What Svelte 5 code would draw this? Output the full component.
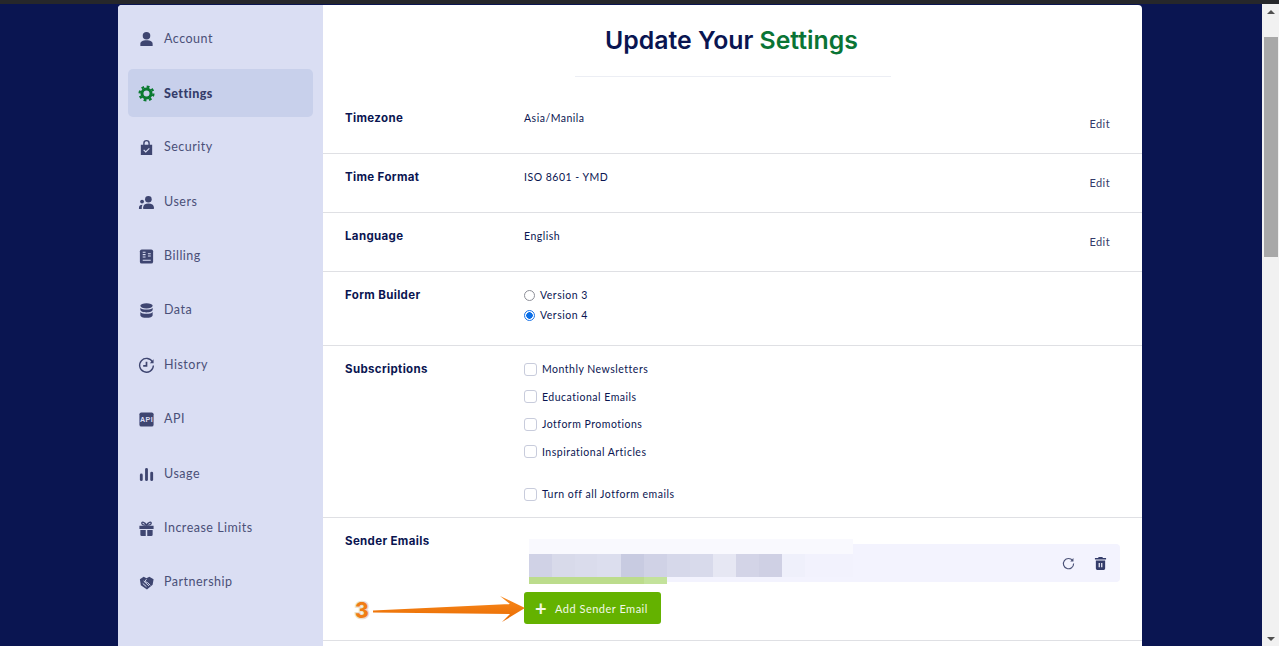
<script>
  const nav = [
    { label: 'Account', icon: 'account' },
    { label: 'Settings', icon: 'settings', active: true },
    { label: 'Security', icon: 'security' },
    { label: 'Users', icon: 'users' },
    { label: 'Billing', icon: 'billing' },
    { label: 'Data', icon: 'data' },
    { label: 'History', icon: 'history' },
    { label: 'API', icon: 'api' },
    { label: 'Usage', icon: 'usage' },
    { label: 'Increase Limits', icon: 'gift' },
    { label: 'Partnership', icon: 'partner' }
  ];

  const simpleRows = [
    { label: 'Timezone', value: 'Asia/Manila' },
    { label: 'Time Format', value: 'ISO 8601 - YMD' },
    { label: 'Language', value: 'English' }
  ];

  const subscriptions = ['Monthly Newsletters', 'Educational Emails', 'Jotform Promotions', 'Inspirational Articles'];

  // pixelated blur that hides the address
  const blurBlocks = [
    ['#d0d2e6', 23], ['#d8daea', 23], ['#dadcec', 22], ['#dcdeee', 24], ['#c8cbe1', 23], ['#d0d2e6', 23],
    ['#d6d8ea', 23], ['#d8daeb', 23], ['#e6e7f3', 23], ['#d3d4e7', 23], ['#cfd0e4', 23], ['#eff0fb', 23], ['#f2f2fd', 48]
  ];
</script>

<div class="page">
  <div class="topbar"></div>
  <div class="viewport">
    <div class="canvas">
      <div class="card">
        <aside class="sidebar">
          {#each nav as item}
            <div class="nav-item" class:active={item.active}>
              <svg class="nav-icon" viewBox="0 0 18 18" fill="#3e4570">
                {#if item.icon === 'account'}
                  <circle cx="9" cy="5" r="4" />
                  <path d="M2.500 16v-2.500C2.500 11 5 9.700 9 9.700s6.500 1.300 6.500 3.800V16z" />
                {:else if item.icon === 'settings'}
                  <circle cx="9" cy="9" r="4.800" fill="none" stroke="#0a7a30" stroke-width="3.200" />
                  <circle cx="9" cy="9" r="7.300" fill="none" stroke="#0a7a30" stroke-width="2.400" stroke-dasharray="3 2.730" />
                {:else if item.icon === 'security'}
                  <path fill-rule="evenodd" d="M5.500 6V4.500a3.500 3.500 0 0 1 7 0V6H15v11H3V6zM7 6h4V4.500a2 2 0 0 0-4 0z" />
                  <path d="M6 11.500l2.200 2.200L12 10" fill="none" stroke="#dadef3" stroke-width="1.200" />
                {:else if item.icon === 'users'}
                  <circle cx="11" cy="5.500" r="3.500" />
                  <path d="M5.500 16v-2c0-2.500 2-4 5.500-4s5.800 1.500 5.800 4v2z" />
                  <circle cx="4.300" cy="8" r="2" />
                  <path d="M1 16v-1.500C1 12.500 2.300 11.300 4.800 11.300c-.5.800-.8 1.700-.8 2.700v2z" />
                {:else if item.icon === 'billing'}
                  <rect x="2" y="1.500" width="14" height="15" rx="2" />
                  <path d="M5 4.500h3M5 7h3M5 9.500h3M10.500 6h3M10.500 8.500h3M5 13h8.500" stroke="#dadef3" stroke-width="1.100" fill="none" />
                {:else if item.icon === 'data'}
                  <ellipse cx="9" cy="4" rx="6.500" ry="2.800" />
                  <path d="M2.500 6v2.200C2.500 9.800 5.400 11 9 11s6.500-1.200 6.500-2.800V6C14.300 7.500 11.800 8 9 8S3.700 7.500 2.500 6z" />
                  <path d="M2.500 10.500v3.500c0 1.600 2.900 2.800 6.500 2.800s6.500-1.200 6.500-2.800v-3.500c-1.200 1.500-3.700 2-6.500 2s-5.300-.5-6.500-2z" />
                {:else if item.icon === 'history'}
                  <path d="M15.500 5.500A7.300 7.300 0 1 0 16.300 9" fill="none" stroke="#3e4570" stroke-width="1.400" />
                  <path d="M16.500 2.500v4h-4z" />
                  <path d="M9 5v4.500H5.500" fill="none" stroke="#3e4570" stroke-width="1.800" />
                {:else if item.icon === 'api'}
                  <rect x="1.500" y="1.500" width="15" height="15" rx="2" />
                  <text x="9" y="12" text-anchor="middle" class="api-text">API</text>
                {:else if item.icon === 'usage'}
                  <rect x="2" y="8" width="3" height="8" rx="1.500" />
                  <rect x="7.500" y="2" width="3" height="14" rx="1.500" />
                  <rect x="13" y="6" width="3" height="10" rx="1.500" />
                {:else if item.icon === 'gift'}
                  <path fill-rule="evenodd" d="M1.500 6h15v3.500h-15zM2.500 10.500h5.700V17H4a1.500 1.500 0 0 1-1.500-1.500zM9.800 10.500h5.700v5a1.500 1.500 0 0 1-1.500 1.500H9.800z" />
                  <path d="M9 5.500C7 2 4 1.500 4 3.500S7 5.500 9 5.500C11 5.500 14 5.500 14 3.500S11 2 9 5.500z" fill="none" stroke="#3e4570" stroke-width="1.400" />
                {:else}
                  <path d="M2 5.500L6 3l3 1.500L12 3l4.500 2.500-1 6L9.500 16.500 3 12z" />
                  <path d="M6 7.500l5.500 5M5 10l4 3.500M9 5.500L7 8l3 1 3 3" fill="none" stroke="#dadef3" stroke-width="1" />
                {/if}
              </svg>
              <span>{item.label}</span>
            </div>
          {/each}
        </aside>

        <main class="main">
          <header class="head">
            <h1>Update Your <em>Settings</em></h1>
            <div class="head-rule"></div>
          </header>

          {#each simpleRows as row}
            <section class="row simple">
              <h2>{row.label}</h2>
              <div class="value">{row.value}</div>
              <button class="edit">Edit</button>
            </section>
          {/each}

          <section class="row builder">
            <h2>Form Builder</h2>
            <div class="options">
              <label class="opt"><span class="radio"></span>Version 3</label>
              <label class="opt"><span class="radio on"></span>Version 4</label>
            </div>
          </section>

          <section class="row subs">
            <h2>Subscriptions</h2>
            <div class="checks">
              {#each subscriptions as s}
                <label class="chk"><span class="box"></span>{s}</label>
              {/each}
              <label class="chk off"><span class="box"></span>Turn off all Jotform emails</label>
            </div>
          </section>

          <section class="row sender">
            <h2>Sender Emails</h2>
            <div class="sender-body">
              <div class="email-panel">
                <div class="blur">
                  <div class="blur-top"></div>
                  <div class="blur-mid">
                    {#each blurBlocks as b}
                      <i style="background:{b[0]};width:{b[1]}px"></i>
                    {/each}
                  </div>
                  <div class="blur-bot"></div>
                </div>
                <svg class="act" viewBox="0 0 14 14" fill="none" stroke="#4b5278" stroke-width="1.200">
                  <path d="M11.500 4A5.500 5.500 0 1 0 12.500 7" />
                  <path d="M12.300 1.200v3.600H8.900z" fill="#4b5278" stroke="none" />
                </svg>
                <svg class="act" viewBox="0 0 14 14" fill="#343c6a">
                  <path d="M5 0h4l.6 1.200H13v1.600H1V1.200h3.400z" />
                  <path fill-rule="evenodd" d="M2 3.800h10v8.700A1.500 1.500 0 0 1 10.500 14h-7A1.500 1.500 0 0 1 2 12.500zM5 6.500v4.500h1.300V6.500zM7.700 6.500v4.500H9V6.500z" />
                </svg>
              </div>
              <button class="add"><span class="plus">+</span>Add Sender Email</button>
              <svg class="callout" width="180" height="44" viewBox="0 0 180 44">
                <defs>
                  <linearGradient id="arrow" x1="0" x2="0" y1="0" y2="1">
                    <stop offset="0" stop-color="#f98a1e" />
                    <stop offset="1" stop-color="#e86a00" />
                  </linearGradient>
                </defs>
                <path d="M21 28.500L158 22 148 14 173 26 150 40 158 32 21 30.500z" fill="url(#arrow)" />
                <text x="3" y="36" class="three">3</text>
              </svg>
            </div>
          </section>
        </main>
      </div>
    </div>
    <div class="scrollbar">
      <div class="arrow-up"></div>
      <div class="thumb"></div>
      <div class="arrow-down"></div>
    </div>
  </div>
</div>

<style>
  :global(body) {
    margin: 0;
    overflow: hidden;
  }

  .page {
    height: 646px;
    display: flex;
    flex-direction: column;
    overflow: hidden;
    font-family: Lato, "Liberation Sans", sans-serif;
    color: #0a1551;
  }

  .topbar {
    height: 4px;
    background: #26272b;
    flex-shrink: 0;
  }

  .viewport {
    flex: 1;
    display: flex;
    min-height: 0;
    background: #0a1551;
  }

  .canvas {
    flex: 1;
    padding: 1px 120px 0 118px;
    overflow: hidden;
  }

  .card {
    display: flex;
    background: #fff;
    border-radius: 4px 4px 0 0;
    height: 700px;
    overflow: hidden;
  }

  /* Sidebar */
  .sidebar {
    width: 205px;
    flex-shrink: 0;
    box-sizing: border-box;
    padding: 10px 10px 0;
    background: #dadef3;
    display: flex;
    flex-direction: column;
    gap: 6.400px;
  }

  .nav-item {
    height: 48px;
    flex-shrink: 0;
    display: flex;
    align-items: center;
    gap: 9px;
    padding-left: 10px;
    border-radius: 5px;
    font-size: 12.500px;
    letter-spacing: 0.5px;
    color: #4a5078;
  }

  .nav-item span {
    position: relative;
    top: -1px;
  }

  .nav-item.active {
    background: #c8d0eb;
    font-weight: 900;
    color: #343c6a;
    letter-spacing: 0.4px;
  }

  .nav-item.active span {
    top: 0;
  }

  .nav-icon {
    width: 17px;
    height: 17px;
    flex-shrink: 0;
  }

  .api-text {
    font-size: 7.500px;
    font-weight: 700;
    fill: #dadef3;
    font-family: "Liberation Sans", sans-serif;
  }

  /* Main column */
  .main {
    flex: 1;
    min-width: 0;
  }

  .head {
    height: 90px;
    box-sizing: border-box;
    padding-top: 20px;
  }

  h1 {
    margin: 0;
    text-align: center;
    font-family: Inter, sans-serif;
    font-size: 24.800px;
    line-height: 30px;
    font-weight: 600;
    color: #0a1551;
    position: relative;
    left: -1px;
  }

  h1 em {
    font-style: normal;
    color: #0a7435;
  }

  .head-rule {
    width: 316px;
    height: 1px;
    margin: 21px auto 0;
    background: #eceef4;
  }

  .row {
    display: flex;
    align-items: flex-start;
    box-sizing: border-box;
    padding: 16px 22px 0;
    border-bottom: 1px solid #dfe0e4;
  }

  .row h2 {
    width: 179px;
    flex-shrink: 0;
    margin: 0;
    font-family: Inter, sans-serif;
    font-size: 11.500px;
    line-height: 14px;
    font-weight: 700;
    letter-spacing: 0.35px;
    color: #0a1551;
  }

  .simple {
    height: 59px;
  }

  .value {
    flex: 1;
    font-size: 10.500px;
    line-height: 14px;
    letter-spacing: 0.5px;
    color: #0a1551;
  }

  .edit {
    align-self: center;
    border: 0;
    padding: 0;
    margin: 0 10px 0 0;
    background: none;
    font-family: Lato, sans-serif;
    font-size: 11px;
    letter-spacing: 0.4px;
    color: #343c6a;
    position: relative;
    top: -9px;
  }

  .builder {
    height: 74px;
  }

  .options {
    display: flex;
    flex-direction: column;
    gap: 6px;
  }

  .opt,
  .chk {
    display: flex;
    align-items: center;
    font-size: 10.500px;
    letter-spacing: 0.5px;
    color: #0a1551;
  }

  .opt {
    height: 14px;
    gap: 5px;
  }

  .radio {
    width: 9px;
    height: 9px;
    border: 1px solid #8d8f98;
    border-radius: 50%;
    background: #fff;
  }

  .radio.on {
    border-color: #1a73e8;
    background: radial-gradient(circle, #0b6fe8 0 3px, #fff 3.500px);
  }

  .subs {
    height: 172px;
  }

  .checks {
    display: flex;
    flex-direction: column;
    gap: 13.500px;
  }

  .chk {
    height: 14px;
    gap: 5px;
  }

  .chk.off {
    margin-top: 15px;
  }

  .box {
    width: 11px;
    height: 11px;
    border: 1px solid #c8ccdc;
    border-radius: 3px;
    background: #fff;
  }

  .sender {
    height: 123px;
  }

  .sender-body {
    flex: 1;
    position: relative;
    padding-top: 10px;
  }

  .email-panel {
    height: 38px;
    width: 591px;
    margin-left: 5px;
    background: #f3f3fe;
    border-radius: 0 4px 4px 0;
    display: flex;
    align-items: center;
    justify-content: flex-end;
    gap: 19px;
    padding-right: 13px;
    box-sizing: border-box;
    position: relative;
  }

  .blur {
    position: absolute;
    left: 0;
    top: -5px;
    width: 324px;
    display: flex;
    flex-direction: column;
  }

  .blur-top {
    height: 15px;
    background: #f9f9fe;
  }

  .blur-mid {
    height: 23px;
    display: flex;
    background: #f2f2fd;
  }

  .blur-mid i {
    display: block;
    height: 100%;
    flex-shrink: 0;
  }

  .blur-bot {
    height: 7px;
    width: 138px;
    background: linear-gradient(90deg, #bcdc8c 0 115px, #c3e29b 115px);
  }

  .act {
    width: 13px;
    height: 13px;
  }

  .add {
    display: flex;
    align-items: center;
    margin-top: 10px;
    width: 137px;
    height: 32px;
    border: 0;
    border-radius: 3px;
    padding: 0 0 0 11px;
    background: #64b200;
    color: #f2f9e6;
    font-family: Lato, sans-serif;
    font-size: 11px;
    letter-spacing: 0.5px;
    box-sizing: border-box;
  }

  .plus {
    font-size: 20px;
    line-height: 1;
    width: 20px;
    text-align: left;
    font-weight: 700;
  }

  .callout {
    position: absolute;
    left: -172px;
    top: 48px;
  }

  .three {
    font-family: Inter, sans-serif;
    font-size: 21px;
    font-weight: 800;
    fill: #f07d14;
    stroke: #eadfcf;
    stroke-width: 2.500px;
    paint-order: stroke;
  }

  /* Browser scrollbar */
  .scrollbar {
    width: 17px;
    flex-shrink: 0;
    background: #f1f1f1;
    position: relative;
    display: flex;
    flex-direction: column;
    align-items: center;
  }

  .arrow-up {
    margin-top: 6px;
    border: 4px solid transparent;
    border-top: 0;
    border-bottom: 4px solid #505050;
  }

  .thumb {
    width: 14px;
    height: 220px;
    margin-top: 23px;
    background: #a8a8a8;
  }

  .arrow-down {
    position: absolute;
    bottom: 5px;
    border: 4px solid transparent;
    border-bottom: 0;
    border-top: 4px solid #505050;
  }
</style>
